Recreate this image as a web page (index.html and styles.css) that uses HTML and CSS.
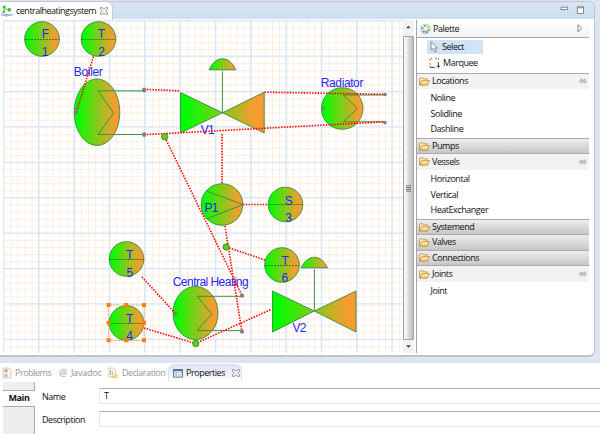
FILE: index.html
```html
<!DOCTYPE html>
<html lang="en">
<head>
<meta charset="utf-8">
<title>centralheatingsystem</title>
<link rel="stylesheet" href="styles.css">
</head>
<body>
<svg class="defs" width="0" height="0">
  <defs>
    <linearGradient id="body" x1="0" x2="1" y1="0" y2="0"><stop offset="0.05" stop-color="#00ff00"/><stop offset="0.9" stop-color="#f89b30"/></linearGradient>
    <linearGradient id="fold" x1="0" x2="0" y1="0" y2="1"><stop offset="0" stop-color="#fff2b8"/><stop offset="1" stop-color="#f3c865"/></linearGradient>
    <pattern id="minor" x="3.3" y="20.7" width="7.07" height="7.07" patternUnits="userSpaceOnUse"><path d="M0 .5H7.07M.5 0V7.07" stroke="#fdeee2" stroke-width="1"/></pattern>
    <pattern id="major" x="2.7" y="20.1" width="35.33" height="35.4" patternUnits="userSpaceOnUse"><path d="M0 .7H35.4M.7 0V35.4" stroke="#d6e6f5" stroke-width="1.3"/></pattern>
    <symbol id="folder" viewBox="0 0 11 9"><path d="M.5 7.8V1.8L1.3.8H3.8L4.8 1.8H8V3.4" fill="#ffedb0" stroke="#bd8638" stroke-width=".8"/><path d="M.7 8.2 3 3.6H10.5L8.3 8.2Z" fill="url(#fold)" stroke="#bd8638" stroke-width=".8"/></symbol>
    <symbol id="pin" viewBox="0 0 8 6"><path d="M3 1H2.4L.7 3 2.4 5H3M5 1H5.6L7.3 3 5.6 5H5M2.5 2.2H5.5M2.5 3.8H5.5" fill="none" stroke="#858585" stroke-width=".8"/></symbol>
    <symbol id="close" viewBox="0 0 8 8"><path d="M.6.6H2.3L4 2.4 5.7.6H7.4V2.2L5.7 4 7.4 5.8V7.4H5.7L4 5.6 2.3 7.4H.6V5.8L2.3 4 .6 2.2Z" fill="#fff" stroke="#747474" stroke-width=".8"/></symbol>
  </defs>
</svg>
<div class="workbench">
  <section class="editor">
    <div class="tabbar">
      <div class="tab">
        <svg width="12" height="12" viewBox="0 0 12 12"><path d="M3 2.5 5.5 4.5H9M3 2.5V7" fill="none" stroke="#36bd25" stroke-width=".9"/><path d="M1.8.8H4.6V3.2H1.8ZM1.6 5.8H4.2V7.8H1.6ZM6.8 3.2H9.8V6.4H6.8Z" fill="#36bd25"/><text class="tiny" x="0" y="11" textLength="11.5">Diagram</text></svg>
        <span class="tab-title">centralheatingsystem</span>
        <svg class="tab-close" width="8" height="8"><use href="#close"/></svg>
      </div>
      <div class="controls">
        <svg width="25" height="10" viewBox="0 0 25 10"><rect x="1" y="2.2" width="6.6" height="2.4" fill="#fff" stroke="#808080" stroke-width=".9"/><rect x="17.3" y="1.8" width="6.2" height="6.7" fill="#fff" stroke="#808080" stroke-width=".9"/><path d="M17 2.8H24" stroke="#808080"/></svg>
      </div>
    </div>
    <div class="content">
      <svg class="canvas" width="400" height="333" viewBox="3 20 400 333">
        <rect x="3" y="20" width="401" height="333" fill="#fff"/>
        <rect x="3" y="20" width="401" height="333" fill="url(#minor)"/>
        <rect x="3" y="20" width="401" height="333" fill="url(#major)"/>
        <g class="shape">
          <circle cx="42" cy="39" r="17.3"/><circle cx="98.5" cy="39" r="17.3"/>
          <circle cx="285.5" cy="204.5" r="17.3"/><circle cx="282" cy="265" r="17.3"/>
          <circle cx="126.5" cy="259" r="17.3"/><circle cx="126.5" cy="323" r="17.3"/>
          <ellipse cx="97" cy="112.2" rx="22.8" ry="33.3"/>
          <ellipse cx="195.5" cy="313" rx="22.5" ry="26.6"/>
          <circle cx="342.2" cy="108.5" r="20.8"/><circle cx="222" cy="204.5" r="20.8"/>
          <path d="M180.5 92.5 222.5 112.8 264.2 92.2V133L222.5 112.8 180.5 133Z"/>
          <path d="M209 69.8C213 62 217 58.8 222.4 58.8S232 62 235.8 69.8Z"/>
          <path d="M272.5 291 314.3 311 356 291V332L314.3 311 272.5 332Z"/>
          <path d="M301 267.8C305 260.5 309 257.3 314.3 257.3S323.5 260.5 327.5 267.8Z"/>
        </g>
        <g class="line">
          <path d="M98 90.8H144M98 134.5H144M98 90.8 113.5 113 98 134.5"/>
          <path d="M197 296.3H242M197 330.6H242M197 296.3 212 314 197 330.6"/>
          <path d="M343.3 95H385M343.3 121.8H385M343.3 95 357.5 108.6 343.3 121.8"/>
          <path d="M207.5 191.5 243 204.5 207.5 218.5M222.4 71.2V112.8M314.4 269.3V311"/>
        </g>
        <path class="divider" d="M25 39.5H59M81.5 39.5H115.5M268.5 204.5H302.5M265 265.5H299M109.5 259.5H143.5M109.5 323.5H143.5"/>
        <g class="label">
          <text x="41.7" y="38.4">F</text><text x="41.7" y="56">1</text>
          <text x="97.8" y="38.4">T</text><text x="98.3" y="56">2</text>
          <text x="284.8" y="204.5">S</text><text x="285.3" y="222.2">3</text>
          <text x="281.5" y="264.5">T</text><text x="281.5" y="282">6</text>
          <text x="126" y="258.8">T</text><text x="126.4" y="276.6">5</text>
          <text x="126" y="322.6">T</text><text x="126.2" y="340.2">4</text>
          <text x="73.8" y="75.7" textLength="29">Boiler</text>
          <text x="200.8" y="133.7" textLength="13.8">V1</text>
          <text x="320.8" y="87" textLength="42.6">Radiator</text>
          <text x="204.4" y="212" textLength="14">P1</text>
          <text x="172.7" y="285.5" textLength="76">Central Heating</text>
          <text x="292.5" y="332" textLength="14">V2</text>
        </g>
        <g class="flow">
          <path d="M93.5 56.5 76.5 111.5M144 89.3 180 90.8M144 134.7 385 121.8M264.5 92.2 385 94.3M222 134V184M243 204.5H268M165 137.5 242 295.5M225 226 242 332M226.5 247 265 260M142 277 175 313M144 328 195.5 343.5 271 309.5"/>
        </g>
        <g class="port"><ellipse cx="76.3" cy="111.7" rx="2.1" ry="2.6"/><ellipse cx="144.2" cy="90" rx="2.1" ry="2.6"/><ellipse cx="144.2" cy="134.5" rx="2.1" ry="2.6"/><circle cx="323.3" cy="108.6" r="1.9"/><circle cx="385" cy="94.5" r="1.8"/><circle cx="385" cy="122.8" r="1.8"/><circle cx="175.5" cy="314" r="2.1"/><circle cx="242" cy="295.7" r="2.1"/><circle cx="242" cy="331.7" r="2.1"/></g>
        <g class="joint"><circle cx="164.7" cy="136.7" r="3.2"/><circle cx="226.2" cy="247" r="3.2"/><circle cx="195.8" cy="343.4" r="3.2"/></g>
        <rect class="selection" x="108.5" y="305" width="35.5" height="35.5"/>
        <path class="handles" d="M106.6 303H110.6V307H106.6ZM124.3 303H128.3V307H124.3ZM142 303H146V307H142ZM106.6 320.7H110.6V324.7H106.6ZM142 320.7H146V324.7H142ZM106.6 338.3H110.6V342.3H106.6ZM124.3 338.3H128.3V342.3H124.3ZM142 338.3H146V342.3H142Z"/>
      </svg>
      <div class="scrollbar">
        <svg width="11" height="16" viewBox="0 0 11 16"><path d="M3 8.2 5.3 5.7 7.6 8.2Z" fill="#444"/></svg>
        <div class="thumb"><svg width="5" height="7" viewBox="0 0 5 7"><path d="M0 .8H5M0 2.6H5M0 4.4H5M0 6.2H5" stroke="#666" stroke-width=".9"/></svg></div>
        <svg width="11" height="13" viewBox="0 0 11 13"><path d="M3 5.2H8L5.5 7.7Z" fill="#444"/></svg>
      </div>
      <aside class="palette">
        <header class="palette-head">
          <svg width="11" height="12" viewBox="0 0 11 12"><circle cx="5.5" cy="6" r="4.8" fill="#eef2f8" stroke="#9cb1cb" stroke-width=".7"/><path d="M4 2H6V4H4Z" fill="#7acb4b"/><path d="M7 2.8H9V4.8H7Z" fill="#efb927"/><path d="M7.3 6H9.2V8H7.3Z" fill="#6abf42"/><path d="M5.5 8H7.5V10H5.5Z" fill="#4385ed"/><path d="M2.7 7.5H4.7V9.5H2.7Z" fill="#e45242"/><path d="M1.5 4.3H3.5V6.3H1.5Z" fill="#38aee0"/></svg>
          <span>Palette</span>
          <svg class="end" width="6" height="9" viewBox="0 0 6 9"><path d="M1 .8V7.8L4.8 4.3Z" fill="#fff" stroke="#777" stroke-width=".9"/></svg>
        </header>
        <div class="tools">
          <div class="tool chosen"><svg width="9" height="12" viewBox="0 0 9 12"><path d="M1 .8V9L3 7.5 4.5 11 6.3 10.3 4.8 7H7.5Z" fill="#fff8dc" stroke="#80776c" stroke-width=".8"/></svg><span>Select</span></div>
          <div class="tool"><svg width="11" height="12" viewBox="0 0 11 12"><path d="M1 4V1.3H4M6 1.3H9.4V4M1 6V10.3H4" fill="none" stroke="#9a7d3d" stroke-dasharray="2 1"/><path d="M1.2 10.4H6M9.4 5V10M7.5 9.3H11M9.3 7.8V11.3" stroke="#31588a"/></svg><span>Marquee</span></div>
        </div>
        <div class="drawer open first"><svg width="11" height="9"><use href="#folder"/></svg><span>Locations</span><svg class="end" width="8" height="6"><use href="#pin"/></svg></div>
        <ul class="items locations"><li>Noline</li><li>Solidline</li><li>Dashline</li></ul>
        <div class="drawer closed"><svg width="11" height="9"><use href="#folder"/></svg><span>Pumps</span></div>
        <div class="drawer open"><svg width="11" height="9"><use href="#folder"/></svg><span>Vessels</span><svg class="end" width="8" height="6"><use href="#pin"/></svg></div>
        <ul class="items vessels"><li>Horizontal</li><li>Vertical</li><li>HeatExchanger</li></ul>
        <div class="drawer closed"><svg width="11" height="9"><use href="#folder"/></svg><span>Systemend</span></div>
        <div class="drawer closed"><svg width="11" height="9"><use href="#folder"/></svg><span>Valves</span></div>
        <div class="drawer closed"><svg width="11" height="9"><use href="#folder"/></svg><span>Connections</span></div>
        <div class="drawer open"><svg width="11" height="9"><use href="#folder"/></svg><span>Joints</span><svg class="end" width="8" height="6"><use href="#pin"/></svg></div>
        <ul class="items joints"><li>Joint</li></ul>
      </aside>
    </div>
  </section>
  <section class="views">
    <nav class="view-tabs">
      <div class="view problems"><svg width="10" height="12" viewBox="0 0 10 12"><path d="M1 1H7L9 3V11H1Z" fill="#faf7f4" stroke="#cdbcb1" stroke-width=".8"/><circle cx="4" cy="3.8" r="1.9" fill="#ef9a9a"/><path d="M2.5 7H5.5V10H2.5Z" fill="#aac1df"/></svg><span>Problems</span></div>
      <div class="view javadoc"><span class="at">@</span><span>Javadoc</span></div>
      <div class="view declaration"><svg width="11" height="12" viewBox="0 0 11 12"><path d="M1 1H5.5L7.5 3V10H1Z" fill="#fff9e9" stroke="#d9c18e" stroke-width=".8"/><path d="M2.5 3V8M4.3 4V8" stroke="#9bb5d4"/><path d="M4 9H7V6.5L10 9 7 11.5V10.3H4Z" fill="#fce3a0" stroke="#d8b66d" stroke-width=".6"/></svg><span>Declaration</span></div>
      <div class="view active"><svg width="10" height="9" viewBox="0 0 10 9"><rect x=".6" y=".6" width="8.8" height="7.5" fill="#fff" stroke="#526b8b"/><path d="M.6 1.5H9.4" stroke="#526b8b" stroke-width="1.4"/><path d="M3.2 1V8M1 3.6H9M1 5.8H9" stroke="#8fa6c4" stroke-width=".7"/></svg><span>Properties</span><svg class="tab-close" width="8" height="8"><use href="#close"/></svg></div>
    </nav>
    <div class="properties">
      <div class="side"><div class="side-top"></div><div class="side-main">Main</div><div class="side-rest"></div></div>
      <div class="form">
        <div class="field"><span class="name">Name</span><div class="input">T</div></div>
        <div class="field"><span class="name">Description</span><div class="input"></div></div>
      </div>
    </div>
  </section>
</div>
</body>
</html>
```
FILE: styles.css
```css
* { box-sizing: border-box; }
body { margin: 0; background: #dfe4f3; color: #111; font: 9px/12px "Open Sans", "Noto Sans", sans-serif; letter-spacing: -.46px; overflow: hidden; }
svg { display: block; flex: none; }
.defs { position: absolute; }
.workbench { width: 600px; height: 434px; display: flex; flex-direction: column; padding-top: 1px; }
.editor { width: 595px; height: 356px; flex: none; border: 1px solid #c1c6d2; border-left: 0; border-bottom: 2px solid #bfc3cf; border-radius: 3px 6px 6px 0; background: #fff; overflow: hidden; }
.tabbar { height: 17px; display: flex; justify-content: space-between; background: linear-gradient(#d9e4f2, #cbdff0); }
.tab { width: 113px; height: 18px; background: #fff; border-right: 1px solid #c0cddd; border-radius: 0 6px 0 0; display: flex; align-items: center; padding-left: 1px; }
.tab-title { width: 80px; margin-left: 3px; letter-spacing: -.5px; white-space: nowrap; }
.tab-close { margin-left: 4px; }
.tiny { font-size: 3.5px; letter-spacing: 0; fill: #3442a5; }
.controls { padding: 3px 9px 0 0; }
.content { display: flex; height: 335px; padding: 1px 0 0 3px; }
.shape { fill: url(#body); stroke: #398b3a; stroke-width: .9; }
.line { fill: none; stroke: #3d933f; stroke-width: 1; }
.divider { stroke: #236429; stroke-width: .8; stroke-dasharray: 2 1; }
.label { font: 12px "Liberation Sans", sans-serif; letter-spacing: 0; fill: #2525f0; }
.flow { fill: none; stroke: #f00; stroke-width: 1.6; stroke-dasharray: 1.5 1.3; }
.port { fill: #808080; }
.joint { fill: #63c913; stroke: #398b3a; stroke-width: .9; }
.selection { fill: none; stroke: #f58d25; stroke-width: .8; stroke-dasharray: 1.5 1; }
.handles { fill: #ff7f00; }
.scrollbar { width: 11px; height: 333px; display: flex; flex-direction: column; background: #f2f2f2; }
.thumb { flex: 1; display: flex; align-items: center; justify-content: center; border: 1px solid #a2a2a6; border-radius: 1px; background: linear-gradient(90deg, #f4f4f4 25%, #d4d4d8 60%, #bdbdc2); }
.palette { width: 173px; height: 333px; margin-left: 2px; border-left: 1px solid #a5a5a5; }
.palette-head { height: 18px; border-bottom: 1px solid #aaa; background: linear-gradient(#fff, #f2f2f2); display: flex; align-items: center; padding: 0 6px 0 3px; gap: 2px; }
.end { margin-left: auto; }
.tools { height: 35px; padding: 2px 0 0 10px; }
.tool { display: flex; align-items: center; width: 56px; height: 14px; padding-left: 3px; gap: 3px; }
.tool + .tool { margin-top: 2px; padding-left: 2px; }
.chosen { background: #cfe3f9; border-radius: 1px; }
.drawer { height: 15.6px; display: flex; align-items: center; padding: 0 2px; gap: 2px; }
.first, .items + .drawer { border-top: 1px solid #aaa; }
.first { height: 15.5px; }
.open { background: #f2f2f2; }
.closed { border-bottom: 1px solid #aaa; background: linear-gradient(#eee, #c6c6c6); }
.items { list-style: none; margin: 0; padding: 1.5px 0 0 13.5px; line-height: 15.6px; }
.locations { height: 49.5px; }
.vessels { height: 49.5px; }
.items + .closed { height: 16px; }
.views { flex: 1; margin-top: 6px; background: #fff; }
.view-tabs { height: 19px; display: flex; color: #969696; }
.view { display: flex; align-items: center; gap: 3px; }
.problems { width: 58px; padding-left: 2px; }
.javadoc { width: 50px; padding-left: 1px; gap: 4px; letter-spacing: -.2px; }
.at { color: #7ba5c9; }
.declaration { width: 60px; }
.active { width: 74px; height: 17px; margin-top: 1px; padding-left: 4px; color: #111; border: 1px solid #dce0ec; border-bottom: 0; border-radius: 6px 6px 0 0; background: linear-gradient(#dde2f0, #fff); }
.properties { display: flex; }
.side { width: 32px; margin-left: 3px; display: flex; flex-direction: column; height: 52px; }
.side-top, .side-rest { background: #eee; border-right: 1px solid #aaa; }
.side-top { height: 9px; border-bottom: 1px solid #aaa; }
.side-main { height: 15px; font-weight: 700; color: #111; text-align: center; line-height: 14px; letter-spacing: -.4px; }
.side-rest { flex: 1; border-top: 1px solid #aaa; }
.form { flex: 1; padding: 6px 0 0 7px; }
.field { display: flex; height: 16px; align-items: center; margin-bottom: 7px; }
.name { width: 57px; padding-top: 1px; }
.input { flex: 1; height: 16px; border: 1px solid #e2e6ed; border-top-color: #aeb0b5; border-right: 0; padding: 1px 4px; }
```
